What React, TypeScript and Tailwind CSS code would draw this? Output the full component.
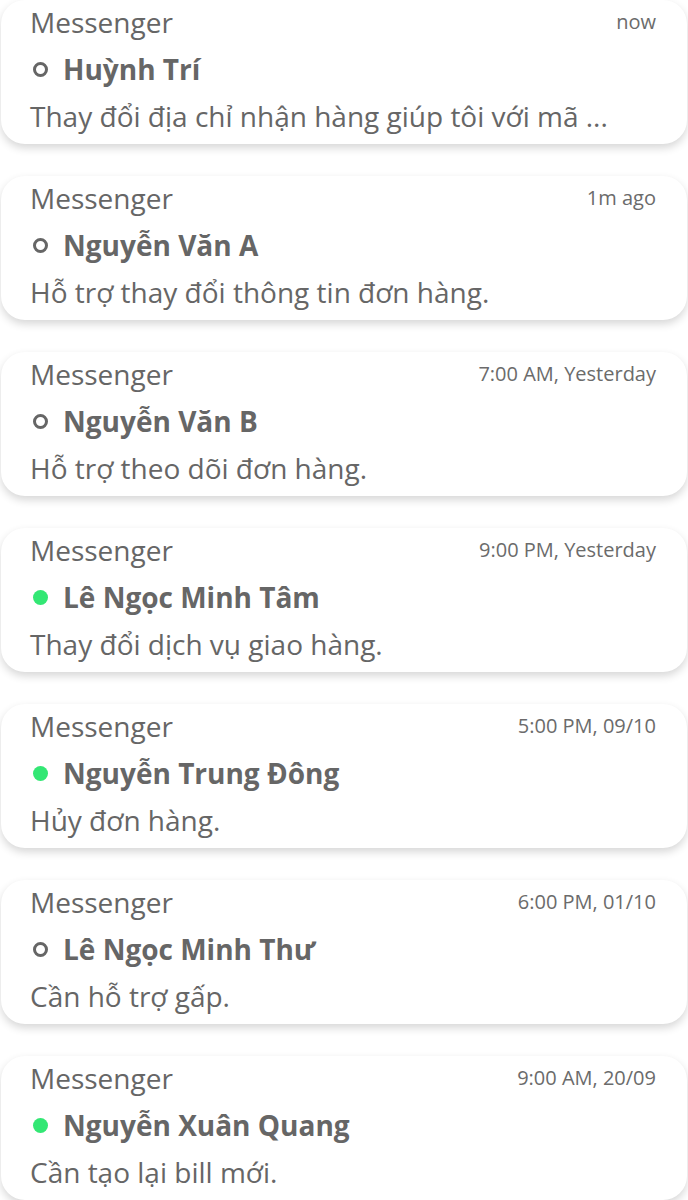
const items = [
  { time: "now", name: "Huỳnh Trí", online: false, text: "Thay đổi địa chỉ nhận hàng giúp tôi với mã ..." },
  { time: "1m ago", name: "Nguyễn Văn A", online: false, text: "Hỗ trợ thay đổi thông tin đơn hàng." },
  { time: "7:00 AM, Yesterday", name: "Nguyễn Văn B", online: false, text: "Hỗ trợ theo dõi đơn hàng." },
  { time: "9:00 PM, Yesterday", name: "Lê Ngọc Minh Tâm", online: true, text: "Thay đổi dịch vụ giao hàng." },
  { time: "5:00 PM, 09/10", name: "Nguyễn Trung Đông", online: true, text: "Hủy đơn hàng." },
  { time: "6:00 PM, 01/10", name: "Lê Ngọc Minh Thư", online: false, text: "Cần hỗ trợ gấp." },
  { time: "9:00 AM, 20/09", name: "Nguyễn Xuân Quang", online: true, text: "Cần tạo lại bill mới." },
];

export default function App() {
  return (
    <div className="flex h-[1200px] flex-col gap-[32px] overflow-hidden bg-white px-[1px] font-['Open_Sans',sans-serif] text-[#666666]">
      {items.map((item) => (
        <div
          key={item.name}
          className="flex h-[144px] shrink-0 flex-col rounded-[24px] bg-white pl-[29px] pr-[31px] shadow-[0_4px_8px_rgba(0,0,0,0.16)]"
        >
          <div className="flex h-[44px] items-center justify-between">
            <span className="text-[28px] leading-none">Messenger</span>
            <span className="text-[20px] leading-none text-[#6b6b6b]">{item.time}</span>
          </div>
          <div className="flex h-[50px] items-center gap-[15px]">
            {item.online ? (
              <span className="ml-[3px] h-[15px] w-[15px] shrink-0 rounded-full bg-[#33e774]" />
            ) : (
              <span className="ml-[3px] h-[15px] w-[15px] shrink-0 rounded-full border-[3.5px] border-solid border-[#666666]" />
            )}
            <span className="text-[28px] font-bold leading-none">{item.name}</span>
          </div>
          <div className="flex h-[44px] items-center">
            <span className="text-[28px] leading-none">{item.text}</span>
          </div>
        </div>
      ))}
    </div>
  );
}
